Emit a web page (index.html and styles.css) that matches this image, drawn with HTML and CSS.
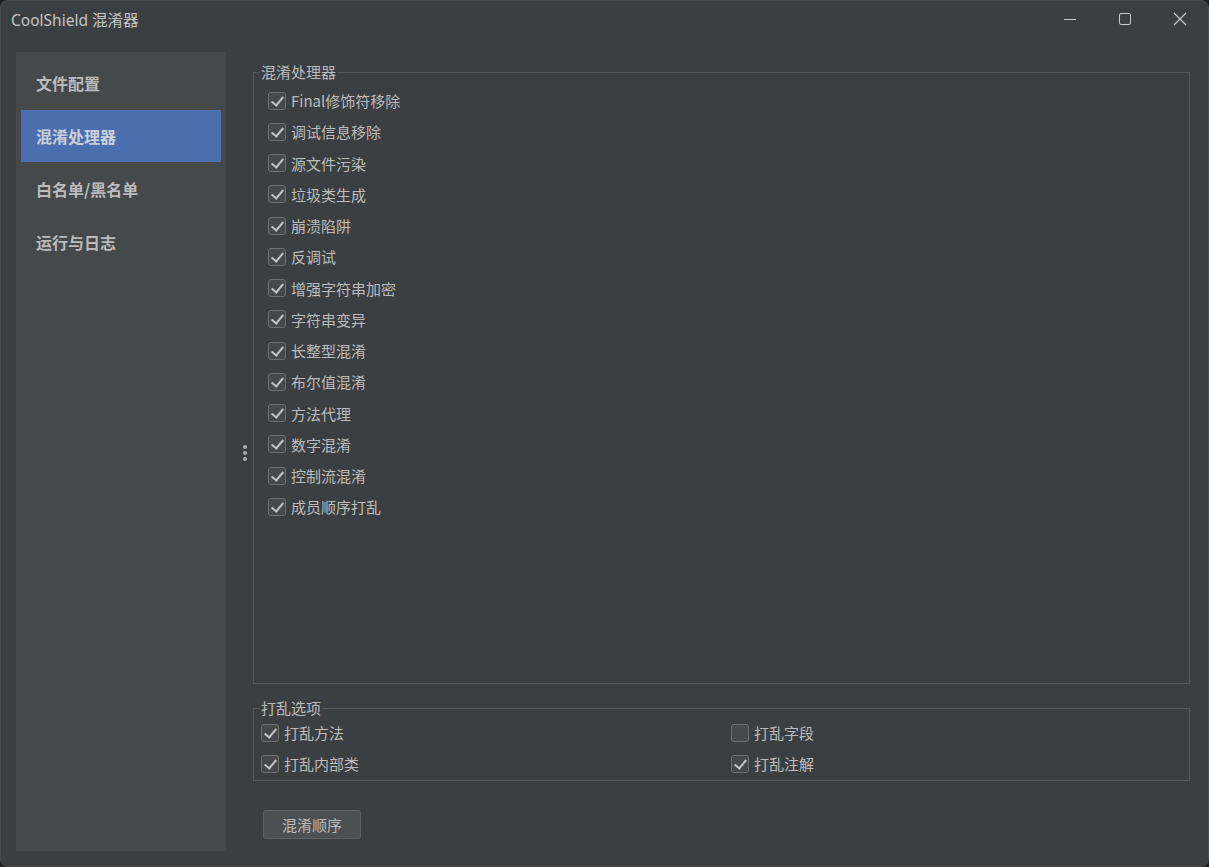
FILE: index.html
```html
<!DOCTYPE html>
<html lang="zh">
<head>
<meta charset="utf-8">
<title>CoolShield 混淆器</title>
<link rel="stylesheet" href="styles.css">
</head>
<body>
<div class="window">
  <div class="titlebar">
    <div class="title">CoolShield 混淆器</div>
    <div class="controls">
      <span class="ctl"><svg width="14" height="14" viewBox="0 0 14 14"><path d="M1 7.5h12" stroke="#c8c8c8" stroke-width="1"/></svg></span>
      <span class="ctl"><svg width="14" height="14" viewBox="0 0 14 14"><rect x="1.5" y="1.5" width="11" height="11" rx="1.5" fill="none" stroke="#c8c8c8" stroke-width="1"/></svg></span>
      <span class="ctl"><svg width="14" height="14" viewBox="0 0 14 14"><path d="M1 1L13 13M13 1L1 13" stroke="#c8c8c8" stroke-width="1.1"/></svg></span>
    </div>
  </div>
  <div class="body">
    <nav class="sidebar">
      <div class="nav-item">文件配置</div>
      <div class="nav-item active">混淆处理器</div>
      <div class="nav-item">白名单/黑名单</div>
      <div class="nav-item">运行与日志</div>
    </nav>
    <div class="splitter"><span></span><span></span><span></span></div>
    <main class="content">
      <fieldset class="group main-group">
        <legend>混淆处理器</legend>
        <div class="list">
          <label class="cb"><span class="box on"></span>Final修饰符移除</label>
          <label class="cb"><span class="box on"></span>调试信息移除</label>
          <label class="cb"><span class="box on"></span>源文件污染</label>
          <label class="cb"><span class="box on"></span>垃圾类生成</label>
          <label class="cb"><span class="box on"></span>崩溃陷阱</label>
          <label class="cb"><span class="box on"></span>反调试</label>
          <label class="cb"><span class="box on"></span>增强字符串加密</label>
          <label class="cb"><span class="box on"></span>字符串变异</label>
          <label class="cb"><span class="box on"></span>长整型混淆</label>
          <label class="cb"><span class="box on"></span>布尔值混淆</label>
          <label class="cb"><span class="box on"></span>方法代理</label>
          <label class="cb"><span class="box on"></span>数字混淆</label>
          <label class="cb"><span class="box on"></span>控制流混淆</label>
          <label class="cb"><span class="box on"></span>成员顺序打乱</label>
        </div>
      </fieldset>
      <fieldset class="group shuffle-group">
        <legend>打乱选项</legend>
        <div class="grid">
          <label class="cb"><span class="box on"></span>打乱方法</label>
          <label class="cb"><span class="box"></span>打乱字段</label>
          <label class="cb"><span class="box on"></span>打乱内部类</label>
          <label class="cb"><span class="box on"></span>打乱注解</label>
        </div>
      </fieldset>
      <div class="actions"><button class="btn">混淆顺序</button></div>
    </main>
  </div>
</div>
</body>
</html>
```
FILE: styles.css
```css
* { box-sizing: border-box; }
html, body { margin: 0; padding: 0; background: #1e1f20; }
body { width: 1209px; height: 867px; overflow: hidden; font-family: "Noto Sans", "Noto Sans CJK SC", sans-serif; }
.window {
  width: 1209px; height: 867px;
  background: #3c3f41;
  border: 1px solid #4a4d50;
  border-radius: 8px;
  overflow: hidden;
  display: flex; flex-direction: column;
  color: #bbbbbb;
}
.titlebar { height: 38px; display: flex; align-items: center; justify-content: space-between; flex: none; }
.title { padding-left: 10px; font-size: 15.5px; color: #c4c4c4; font-family: "Noto Sans", "Noto Sans CJK SC", sans-serif; padding-bottom: 1px; }
.controls { display: flex; height: 100%; }
.ctl { width: 55px; display: flex; align-items: center; justify-content: center; padding-bottom: 2px; }
.ctl:last-child { width: 56px; }
.body { flex: 1; display: flex; padding: 13px 18px 15px 15px; }
.sidebar { width: 210px; background: #45494a; padding-top: 5px; padding-left: 5px; padding-right: 5px; flex: none; }
.nav-item {
  height: 52px; line-height: 52px; padding-left: 15px;
  font-family: "Noto Sans CJK SC", sans-serif; font-weight: bold; font-size: 16px; color: #bbbbbb;
  margin-bottom: 1px;
}
.nav-item.active { background: #4b6eaf; color: #c9cfd9; }
.splitter { width: 27px; display: flex; flex-direction: column; align-items: center; justify-content: center; gap: 2px; flex: none; padding-left: 10px; padding-top: 2px; }
.splitter span { width: 4px; height: 4px; border-radius: 50%; background: #a9abad; }
.content { flex: 1; display: flex; flex-direction: column; }
.group {
  margin: 0; border: 1px solid #55585b; padding: 0;
  font-family: "Noto Sans CJK SC", sans-serif; font-size: 15px;
}
.group legend { padding: 0 1px; margin-left: 6px; font-size: 15px; color: #bbbbbb; line-height: 16px; }
.main-group { height: 620px; margin-top: 12px; }
.list { padding: 5px 0 0 14px; }
.cb { display: flex; align-items: center; height: 31.25px; color: #bbbbbb; white-space: nowrap; }
.box {
  width: 18px; height: 18px; border: 1.5px solid #6e7173; border-radius: 3px; background: #45494a;
  margin-right: 5px; position: relative; flex: none;
}
.box.on::after {
  content: ""; position: absolute; left: 5px; top: 1px; width: 5px; height: 10px;
  border-right: 2px solid #c4c4c4; border-bottom: 2px solid #c4c4c4; transform: rotate(40deg);
}
.shuffle-group { margin-top: 16px; height: 81px; }
.grid { display: grid; grid-template-columns: 470px 1fr; padding: 1px 0 0 7px; }
.actions { padding: 29px 0 0 10px; }
.btn {
  width: 98px; height: 29px; background: #4c5052; border: 1px solid #5e6164; border-radius: 3px;
  color: #bbbbbb; font-family: "Noto Sans CJK SC", sans-serif; font-size: 15px; padding: 0;
}
```
